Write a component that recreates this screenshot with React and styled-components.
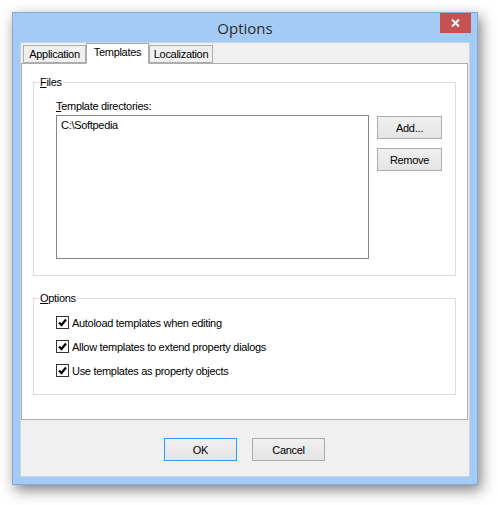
import React from 'react'
import styled, { createGlobalStyle } from 'styled-components'

const Global = createGlobalStyle`
  html, body { margin: 0; padding: 0; background: #fff; }
  body { font-family: "Liberation Sans", Arial, sans-serif; font-size: 11px; letter-spacing: -0.3px; color: #000; }
`

const Desktop = styled.div`
  width: 498px;
  height: 506px;
  padding: 12px 0 0 12px;
  box-sizing: border-box;
`

const Window = styled.div`
  width: 466px;
  height: 473px;
  box-sizing: border-box;
  background: #a4cbf5;
  border: 1px solid #87a9d2;
  padding: 0 7px 7px 7px;
  display: flex;
  flex-direction: column;
  box-shadow: 3px 5px 13px rgba(0,0,0,0.5);
`

const TitleBar = styled.div`
  height: 29px;
  display: flex;
  align-items: center;
  justify-content: center;
  position: relative;
`

const Title = styled.span`
  font-family: "Open Sans", "DejaVu Sans", sans-serif;
  font-size: 15px;
  letter-spacing: 0;
  color: #2b2b2b;
`

const CloseBtn = styled.div`
  position: absolute;
  top: 0;
  right: -1px;
  width: 31px;
  height: 20px;
  background: #c75050;
  display: flex;
  align-items: center;
  justify-content: center;
`

const Client = styled.div`
  flex: 1;
  background: #f0f0f0;
  border: 1px solid #c6d3e0;
  display: flex;
  flex-direction: column;
  padding: 0 1px 0 0;
`

const TabStrip = styled.div`
  display: flex;
  align-items: flex-end;
  height: 21px;
  padding-left: 2px;
  position: relative;
  z-index: 2;
  margin-bottom: -1px;
`

const Tab = styled.div`
  width: ${p => p.$w}px;
  height: ${p => (p.$active ? '21px' : '18px')};
  box-sizing: border-box;
  border: 1px solid #adadad;
  border-bottom: ${p => (p.$active ? '1px solid #fff' : '1px solid #adadad')};
  background: ${p => (p.$active ? '#fff' : '#f0f0f0')};
  display: flex;
  align-items: center;
  justify-content: center;
  line-height: 1;
  padding-bottom: ${p => (p.$active ? '3px' : '0')};
  margin-bottom: ${p => (p.$active ? '0' : '1px')};
`

const Panel = styled.div`
  height: 357px;
  box-sizing: border-box;
  background: #fff;
  border: 1px solid #adadad;
  padding: 12px 11px 0 11px;
  display: flex;
  flex-direction: column;
  gap: 16px;
`

const Group = styled.fieldset`
  margin: 0;
  border: 1px solid #dcdcdc;
  padding: ${p => p.$pad};
  height: ${p => p.$h}px;
  box-sizing: border-box;
`

const Legend = styled.legend`
  padding: 0 1px;
  margin-left: -17px;
  line-height: 13px;
`

const Mn = styled.span`
  text-decoration: underline;
`

const FieldLabel = styled.div`
  line-height: 13px;
  margin-bottom: 2px;
`

const Row = styled.div`
  display: flex;
  gap: 8px;
  align-items: flex-start;
`

const ListBox = styled.div`
  width: 313px;
  height: 144px;
  box-sizing: border-box;
  border: 1px solid #828790;
  padding: 3px 4px;
  line-height: 13px;
`

const ButtonCol = styled.div`
  display: flex;
  flex-direction: column;
  gap: 9px;
  padding-top: 1px;
`

const Button = styled.div`
  width: ${p => p.$w}px;
  height: 23px;
  box-sizing: border-box;
  border: 1px solid ${p => (p.$default ? '#3399ff' : '#acacac')};
  background: linear-gradient(#f0f0f0, #e5e5e5);
  display: flex;
  align-items: center;
  justify-content: center;
`

const CheckList = styled.div`
  display: flex;
  flex-direction: column;
  gap: 11px;
`

const CheckRow = styled.label`
  display: flex;
  align-items: center;
  gap: 3px;
  height: 13px;
`

const Box = styled.span`
  width: 13px;
  height: 13px;
  box-sizing: border-box;
  border: 1px solid #333;
  background: #fff;
  display: flex;
  align-items: center;
  justify-content: center;
`

const Footer = styled.div`
  flex: 1;
  display: flex;
  justify-content: center;
  gap: 15px;
  padding-top: 18px;
`

const Check = ({ children }) => (
  <CheckRow>
    <Box>
      <svg width="9" height="9" viewBox="0 0 9 9">
        <path d="M1 4.5 L3.5 7 L8 1.5" fill="none" stroke="#000" strokeWidth="2.2" />
      </svg>
    </Box>
    {children}
  </CheckRow>
)

export default function App() {
  return (
    <Desktop>
      <Global />
      <Window>
        <TitleBar>
          <Title>Options</Title>
          <CloseBtn>
            <svg width="9" height="8" viewBox="0 0 9 8">
              <path d="M1 0.5 L8 7.5 M8 0.5 L1 7.5" stroke="#fff" strokeWidth="2" />
            </svg>
          </CloseBtn>
        </TitleBar>
        <Client>
          <TabStrip>
            <Tab $w={63}>Application</Tab>
            <Tab $w={63} $active>Templates</Tab>
            <Tab $w={64}>Localization</Tab>
          </TabStrip>
          <Panel>
            <Group $h={200} $pad="11px 10px 0 22px">
              <Legend><Mn>F</Mn>iles</Legend>
              <FieldLabel><Mn>T</Mn>emplate directories:</FieldLabel>
              <Row>
                <ListBox>C:\Softpedia</ListBox>
                <ButtonCol>
                  <Button $w={65}>Add...</Button>
                  <Button $w={65}>Remove</Button>
                </ButtonCol>
              </Row>
            </Group>
            <Group $h={103} $pad="11px 10px 0 22px">
              <Legend><Mn>O</Mn>ptions</Legend>
              <CheckList>
                <Check>Autoload templates when editing</Check>
                <Check>Allow templates to extend property dialogs</Check>
                <Check>Use templates as property objects</Check>
              </CheckList>
            </Group>
          </Panel>
          <Footer>
            <Button $w={73} $default>OK</Button>
            <Button $w={73}>Cancel</Button>
          </Footer>
        </Client>
      </Window>
    </Desktop>
  )
}
